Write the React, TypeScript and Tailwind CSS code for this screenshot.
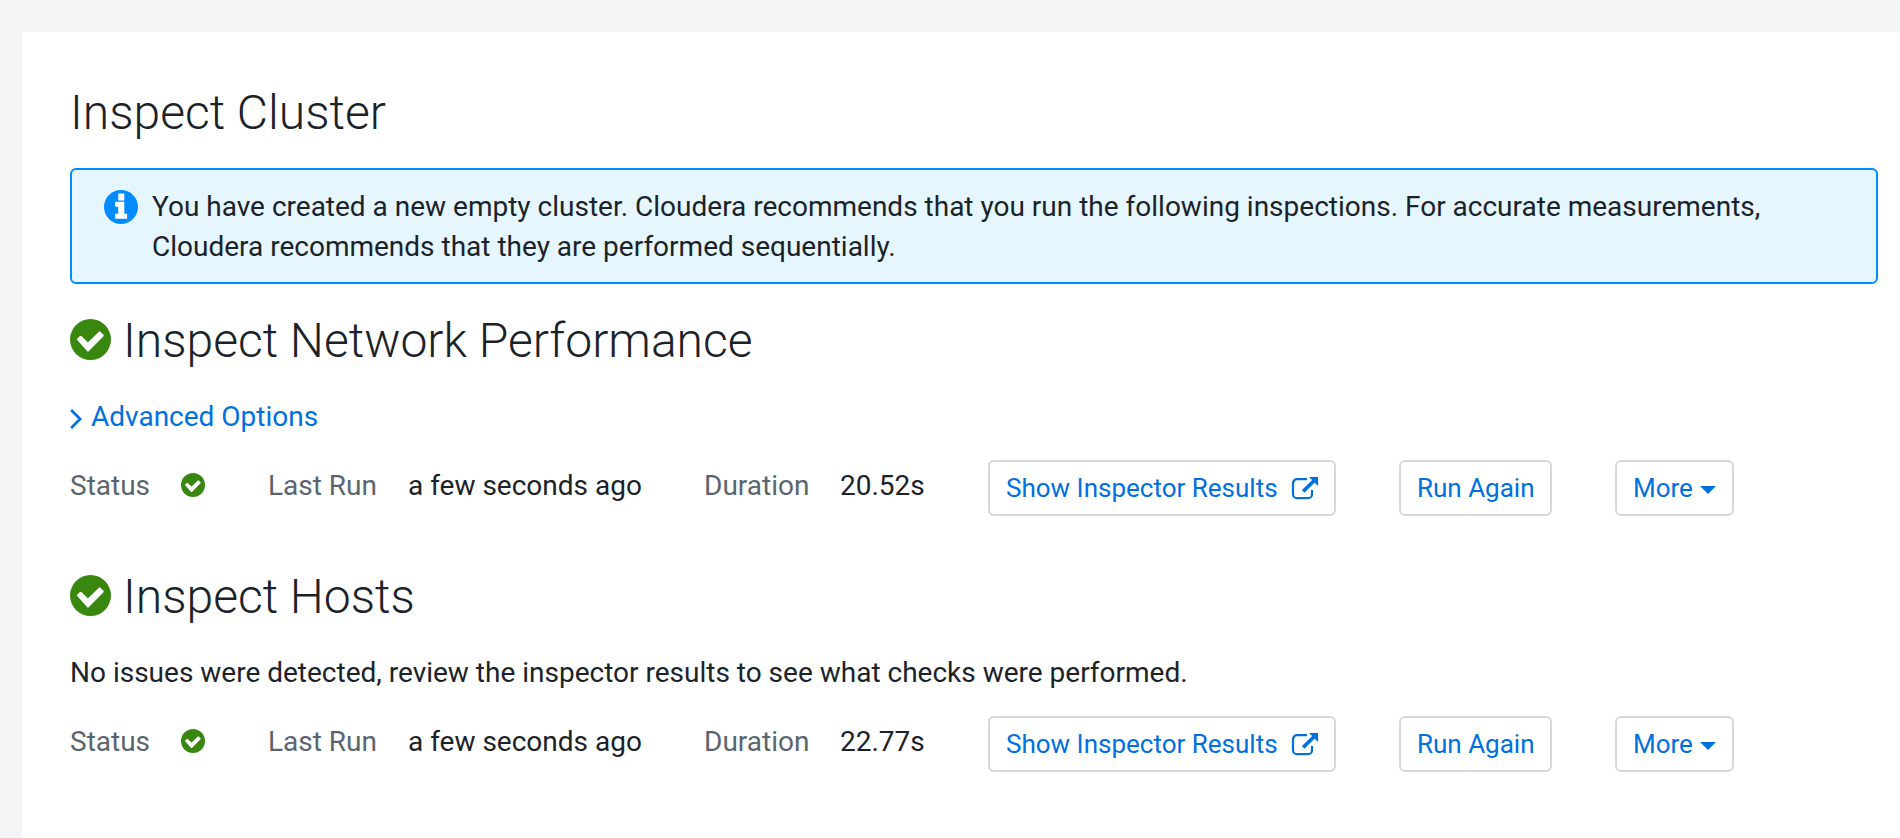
import React from 'react';

const btn = 'flex h-14 items-center whitespace-nowrap rounded-md border-2 border-[#d6d7dc] bg-white text-[26px] text-[#0070e0]';

function CheckIcon({ className }: { className: string }) {
  return (
    <svg viewBox="0 0 41 41" className={className}>
      <circle cx="20.5" cy="20.5" r="20.5" fill="#38870f" />
      <path d="m8 20.300 2.700-2.500L18 24.800 29.600 13.400l3.200 3.100L18 31.600z" fill="#fff" stroke="#fff" strokeWidth="2" strokeLinejoin="round" />
    </svg>
  );
}

function InfoIcon() {
  return (
    <svg viewBox="0 0 34 34" className="mr-[14px] mt-[2.5px] h-[34px] w-[34px] shrink-0">
      <circle cx="17" cy="17" r="17" fill="#008cff" />
      <path d="M14.300 3.600h6v7h-6zM11.200 11.800h9.100v12h2.800v4.900H11.200v-4.900h3v-7h-3z" fill="#fff" />
    </svg>
  );
}

function ChevronIcon() {
  return (
    <svg viewBox="0 0 22 22" className="mt-[3px] h-[22px] w-[21px]" fill="none" stroke="currentColor" strokeWidth="2.800">
      <path d="M1.200 1.600 10.600 11l-9.400 9.400" />
    </svg>
  );
}

function ExternalIcon() {
  return (
    <svg viewBox="0 0 28 26" className="ml-[13px] h-[26px] w-7" fill="none" stroke="currentColor" strokeWidth="2.200">
      <path d="M16 4.200H6a4 4 0 0 0-4 4v11a4 4 0 0 0 4 4h11a4 4 0 0 0 4-4V15" />
      <path d="M12.200 16.400 23 5.800" strokeWidth="3.600" />
      <path d="M18 2h9v9z" fill="currentColor" stroke="none" />
    </svg>
  );
}

function CaretIcon() {
  return (
    <svg viewBox="0 0 16 8" className="ml-[7px] mt-[4px] h-2 w-4" fill="currentColor">
      <path d="M0 0h16L8 8z" />
    </svg>
  );
}

function Heading({ text }: { text: string }) {
  return (
    <h2 className="flex h-[60px] items-center gap-[12px] text-[48px] font-light leading-[60px]">
      <CheckIcon className="mb-px h-[41px] w-[41px]" />
      <span className="pt-px">{text}</span>
    </h2>
  );
}

function StatusRow({ duration }: { duration: string }) {
  return (
    <div className="flex h-14 text-[28px] leading-[52px]">
      <span className="w-[111px] text-[#5a656d]">Status</span>
      <span className="flex w-[87px] pt-[13px]"><CheckIcon className="h-6 w-6" /></span>
      <span className="w-[140px] text-[#5a656d]">Last Run</span>
      <span className="w-[296px]">a few seconds ago</span>
      <span className="w-[136px] text-[#5a656d]">Duration</span>
      <span className="w-[148px]">{duration}</span>
      <button className={btn + ' mr-[63px] w-[348px] pl-4'}>Show Inspector Results<ExternalIcon /></button>
      <button className={btn + ' mr-[63px] w-[153px] pl-4'}>Run Again</button>
      <button className={btn + ' w-[119px] pl-4'}>More<CaretIcon /></button>
    </div>
  );
}

export default function App() {
  return (
    <div className="h-[838px] w-[1900px] overflow-hidden bg-[#f3f4f6] pl-[22px] pt-8 font-['Roboto',sans-serif] text-[#1b2329]">
      <main className="h-full bg-white pl-12 pr-[22px] pt-[50px]">
        <h1 className="h-[60px] pt-px text-[48px] font-light leading-[60px]">Inspect Cluster</h1>
        <div className="mt-[26px] flex h-[116px] rounded-md border-2 border-[#008cff] bg-[#e5f6ff] pl-8 pt-[17px] text-[28px] leading-10">
          <InfoIcon />
          <p>You have created a new empty cluster. Cloudera recommends that you run the following inspections. For accurate measurements,<br />Cloudera recommends that they are performed sequentially.</p>
        </div>
        <section className="mt-[26px]">
          <Heading text="Inspect Network Performance" />
          <div className="mt-[27px] flex h-10 items-center text-[28px] text-[#0070e0]"><ChevronIcon />Advanced Options</div>
          <div className="mt-[23px]"><StatusRow duration="20.52s" /></div>
        </section>
        <section className="mt-[50px]">
          <Heading text="Inspect Hosts" />
          <p className="mt-[27px] h-10 text-[28px] leading-10">No issues were detected, review the inspector results to see what checks were performed.</p>
          <div className="mt-[23px]"><StatusRow duration="22.77s" /></div>
        </section>
      </main>
    </div>
  );
}
